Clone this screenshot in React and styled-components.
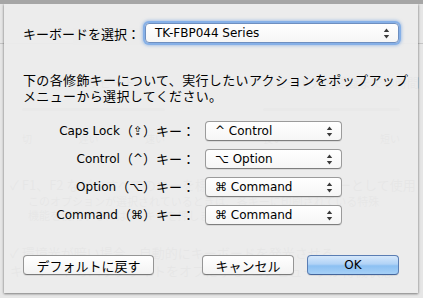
import React from "react";
import styled, { createGlobalStyle } from "styled-components";

const Global = createGlobalStyle`
  html, body { margin: 0; padding: 0; }
  body { width: 423px; height: 298px; overflow: hidden; background: #e4e4e4; }
  * { box-sizing: border-box; }
`;

const FONT = `"Noto Sans CJK JP", "DejaVu Sans", sans-serif`;
const LATIN = `"DejaVu Sans", "Noto Sans CJK JP", sans-serif`;

const BackWindow = styled.div`
  position: relative;
  width: 423px;
  height: 298px;
  background: #e6e6e6;
  border-top: 4px solid #a6a6a6;
  font-family: ${FONT};
  color: #7a7a7a;
  overflow: hidden;
`;

const GhostTop = styled.div`
  display: flex;
  align-items: center;
  height: 40px;
  padding: 26px 0 0 73px;
  border-bottom: 1px solid #c4c4c4;
`;

const GhostTab = styled.div`
  width: 90px;
  height: 17px;
  background: #cfcfcf;
`;

const GhostSliders = styled.div`
  display: grid;
  grid-template-columns: 143px 137px;
  gap: 98px;
  padding: 32px 20px 0 22px;
`;

const GhostSliderCol = styled.div`
  display: flex;
  flex-direction: column;
  gap: 18px;
`;

const GhostCaption = styled.div`
  height: 14px;
  text-align: center;
  font-size: 12px;
  line-height: 14px;
  white-space: nowrap;
`;

const GhostTrack = styled.div`
  height: 3px;
  border-radius: 2px;
  background: #a8a8a8;
`;

const GhostTicks = styled.div`
  display: flex;
  justify-content: space-between;
  font-size: 10px;
  padding-top: 20px;
`;

const GhostChecks = styled.div`
  display: flex;
  flex-direction: column;
  padding: 30px 0 0 10px;
  white-space: nowrap;
`;

const GhostCheck = styled.div`
  font-size: 13px;
  line-height: 18px;
`;

const GhostNote = styled.div`
  font-size: 11px;
  line-height: 14px;
  padding-left: 18px;
  margin-bottom: 22px;
`;

const Sheet = styled.div`
  position: absolute;
  left: 4px;
  top: 0;
  width: 414px;
  height: 289px;
  background: rgba(236, 236, 236, 0.95);
  box-shadow: 0 1px 2px rgba(0, 0, 0, 0.35), 0 0 3px rgba(0, 0, 0, 0.25);
  padding: 19px 19px 14px 19px;
  display: flex;
  flex-direction: column;
  color: #000;
  font-family: ${FONT};
  font-size: 13px;
`;

const Latin = styled.span`
  font-family: ${LATIN};
  font-size: 12px;
`;

const TopRow = styled.div`
  display: flex;
  align-items: center;
  height: 20px;
`;

const TopLabel = styled.div`
  width: 122px;
  white-space: nowrap;
`;

const Popup = styled.div`
  display: flex;
  align-items: center;
  justify-content: space-between;
  width: ${(p) => p.$w}px;
  height: 20px;
  padding: 0 8px 0 ${(p) => p.$pl}px;
  border: 1px solid ${(p) => (p.$focus ? "#6e8fc0" : "#9b9b9b")};
  border-bottom-color: ${(p) => (p.$focus ? "#6e8fc0" : "#7e7e7e")};
  border-radius: 4px;
  background: linear-gradient(#ffffff, #f6f6f6);
  box-shadow: ${(p) =>
    p.$focus
      ? "0 0 0 2px #86b0e7, 0 0 3px 3px rgba(110,160,225,0.5)"
      : "0 1px 0 rgba(0,0,0,0.08)"};
  white-space: nowrap;
  font-family: ${LATIN};
  font-size: 12px;
  line-height: 18px;
`;

const Arrows = () => (
  <svg width="7" height="11" viewBox="0 0 7 11">
    <path d="M3.5 0.5 L6.2 4 L0.8 4 Z" fill="#3a3a3a" />
    <path d="M3.5 10.5 L6.2 7 L0.8 7 Z" fill="#3a3a3a" />
  </svg>
);

const Paragraph = styled.p`
  margin: 29px 0 0 0;
  line-height: 16px;
  letter-spacing: 0.35px;
  white-space: nowrap;
`;

const KeyGrid = styled.div`
  display: grid;
  grid-template-columns: 172px 137px;
  grid-auto-rows: 20px;
  column-gap: 10px;
  row-gap: 8px;
  margin-top: 17px;
  align-items: center;
`;

const KeyLabel = styled.div`
  display: flex;
  justify-content: flex-end;
  align-items: center;
  height: 20px;
  white-space: nowrap;
  line-height: 20px;
`;

const ButtonRow = styled.div`
  display: flex;
  align-items: center;
  margin-top: 30px;
`;

const Button = styled.div`
  display: flex;
  align-items: center;
  justify-content: center;
  width: ${(p) => p.$w}px;
  height: 20px;
  margin-left: ${(p) => p.$ml || 0}px;
  border: 1px solid ${(p) => (p.$primary ? "#5a7db3" : "#959595")};
  border-bottom-color: ${(p) => (p.$primary ? "#44659b" : "#7a7a7a")};
  border-radius: 4px;
  background: ${(p) =>
    p.$primary
      ? "linear-gradient(#d6e8fb 0%, #b0d2f6 45%, #8cc0f2 55%, #a6d0f6 100%)"
      : "linear-gradient(#ffffff, #f3f3f3)"};
  box-shadow: 0 1px 0 rgba(0, 0, 0, 0.08);
  white-space: nowrap;
`;

const rows = [
  ["Caps Lock", "⇪", "^ Control"],
  ["Control", "^", "⌥ Option"],
  ["Option", "⌥", "⌘ Command"],
  ["Command", "⌘", "⌘ Command"],
];

export default function App() {
  return (
    <>
      <Global />
      <BackWindow>
        <GhostTop>
          <GhostTab />
        </GhostTop>
        <GhostSliders>
          <GhostSliderCol>
            <GhostCaption>キーのリピート</GhostCaption>
            <div>
              <GhostTrack />
              <GhostTicks>
                <span>切</span>
                <span>遅い</span>
                <span>速い</span>
              </GhostTicks>
            </div>
          </GhostSliderCol>
          <GhostSliderCol>
            <GhostCaption>リピート入力認識までの時間</GhostCaption>
            <div>
              <GhostTrack />
              <GhostTicks>
                <span>長い</span>
                <span>短い</span>
              </GhostTicks>
            </div>
          </GhostSliderCol>
        </GhostSliders>
        <GhostChecks>
          <GhostCheck>✓ F1、F2 などのすべてのキーを標準のファンクションキーとして使用</GhostCheck>
          <GhostNote>
            このオプションが選択されているときは、各キーに印刷されている特殊
            <br />
            機能を使用するには Fn キーを押します。
          </GhostNote>
          <GhostCheck>✓ 環境光が暗い場合、自動的にキーボードを発光させる</GhostCheck>
          <GhostCheck>キーボードのバックライトをオフにする: コンピュータが待機状態</GhostCheck>
        </GhostChecks>

        <Sheet>
          <TopRow>
            <TopLabel>キーボードを選択：</TopLabel>
            <Popup $w={254} $pl={9} $focus>
              <span>TK-FBP044 Series</span>
              <Arrows />
            </Popup>
          </TopRow>
          <Paragraph>
            下の各修飾キーについて、実行したいアクションをポップアップ
            <br />
            メニューから選択してください。
          </Paragraph>
          <KeyGrid>
            {rows.map(([name, sym, value]) => (
              <React.Fragment key={name}>
                <KeyLabel>
                  <Latin>{name}</Latin>（<Latin>{sym}</Latin>）キー：
                </KeyLabel>
                <Popup $w={137} $pl={9}>
                  <span>{value}</span>
                  <Arrows />
                </Popup>
              </React.Fragment>
            ))}
          </KeyGrid>
          <ButtonRow>
            <Button $w={131}>デフォルトに戻す</Button>
            <Button $w={92} $ml={48}>キャンセル</Button>
            <Button $w={92} $ml={13} $primary>
              <Latin>OK</Latin>
            </Button>
          </ButtonRow>
        </Sheet>
      </BackWindow>
    </>
  );
}
